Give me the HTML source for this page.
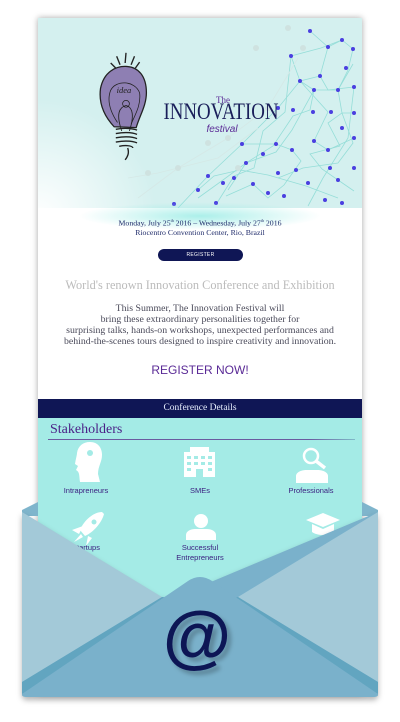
<!DOCTYPE html>
<html><head><meta charset="utf-8"><style>
html,body{margin:0;padding:0;background:#fff;width:400px;height:722px;overflow:hidden;position:relative;font-family:"Liberation Serif",serif}
.card{position:absolute;left:38px;top:18px;width:324px;height:676px;background:#fff;box-shadow:0 0 6px rgba(0,0,0,.35);overflow:hidden}
.hero{position:absolute;left:0;top:0;width:324px;height:190px;background:#d4f0ef;overflow:hidden}
.ab{position:absolute;left:0;width:324px;text-align:center}
.cyan{position:absolute;left:0;top:400px;width:324px;height:300px;background:#a4ebe6}
.lbl{position:absolute;font-family:"Liberation Sans",sans-serif;font-size:7.5px;color:#3b2080;text-align:center;width:90px;line-height:9.5px}
</style></head><body>
<div class="card">
 <div class="hero">
  <div style="position:absolute;left:-60px;top:60px;width:200px;height:200px;background:radial-gradient(circle at 30% 70%,rgba(255,255,255,1) 0%,rgba(255,255,255,0) 60%)"></div>
  <svg width="324" height="190" viewBox="0 0 324 190" style="position:absolute;left:0;top:0">
   <g stroke="#8fdcd6" stroke-width="0.8" fill="none" opacity="0.9">
    <polyline points="272,13 290,29 304,22 315,31 310,52 300,72 304,95 290,105 302,128 272,136 284,151 300,162 316,173"/>
    <polyline points="253,38 262,63 276,72 272,92 255,98 235,128 208,145 185,162 160,180"/>
    <polyline points="290,29 282,58 262,63 290,94 276,123 290,132 316,120"/>
    <polyline points="204,126 238,126 254,132 263,143 246,167 230,180 215,166 188,178"/>
    <polyline points="315,46 300,72 276,72 254,112 238,134 208,145 190,172"/>
    <polyline points="304,22 283,30 253,38 247,94 225,113 216,150 196,158 179,185"/>
    <polyline points="316,95 304,95 315,125 300,145 265,150 240,160"/>
    <polyline points="160,172 176,158 202,152 230,157 268,168 300,180"/>
    <polyline points="282,58 290,72 316,69 310,120 285,160 270,188"/>
    <polyline points="140,190 170,158 204,126 240,90 262,63"/>
   </g>
   <g stroke="#d5e8e6" stroke-width="0.8" fill="none">
    <polyline points="100,180 140,150 190,120 230,90 260,40"/>
    <polyline points="90,160 120,155 180,140 220,110"/>
   </g>
   <g fill="#cfe2e0"><circle cx="140" cy="150" r="3"/><circle cx="190" cy="120" r="3"/><circle cx="110" cy="155" r="3"/><circle cx="230" cy="90" r="3"/><circle cx="265" cy="30" r="3"/><circle cx="218" cy="30" r="3"/><circle cx="250" cy="10" r="3"/><circle cx="200" cy="150" r="3"/><circle cx="170" cy="125" r="3"/></g>
   <g fill="#4a3fe0">
    <circle cx="272" cy="13" r="2"/><circle cx="290" cy="29" r="2"/><circle cx="304" cy="22" r="2"/><circle cx="315" cy="31" r="2"/><circle cx="253" cy="38" r="2"/><circle cx="262" cy="63" r="2"/><circle cx="282" cy="58" r="2"/><circle cx="300" cy="72" r="2"/><circle cx="276" cy="72" r="2"/><circle cx="308" cy="50" r="2"/><circle cx="316" cy="69" r="2"/><circle cx="240" cy="90" r="2"/><circle cx="255" cy="92" r="2"/><circle cx="275" cy="94" r="2"/><circle cx="293" cy="94" r="2"/><circle cx="304" cy="110" r="2"/><circle cx="316" cy="95" r="2"/><circle cx="204" cy="126" r="2"/><circle cx="238" cy="126" r="2"/><circle cx="254" cy="132" r="2"/><circle cx="276" cy="123" r="2"/><circle cx="290" cy="132" r="2"/><circle cx="316" cy="120" r="2"/><circle cx="225" cy="136" r="2"/><circle cx="240" cy="155" r="2"/><circle cx="258" cy="152" r="2"/><circle cx="270" cy="165" r="2"/><circle cx="292" cy="150" r="2"/><circle cx="300" cy="162" r="2"/><circle cx="316" cy="150" r="2"/><circle cx="208" cy="145" r="2"/><circle cx="185" cy="165" r="2"/><circle cx="170" cy="158" r="2"/><circle cx="160" cy="172" r="2"/><circle cx="196" cy="160" r="2"/><circle cx="215" cy="166" r="2"/><circle cx="230" cy="175" r="2"/><circle cx="246" cy="178" r="2"/><circle cx="287" cy="182" r="2"/><circle cx="304" cy="185" r="2"/><circle cx="178" cy="185" r="2"/><circle cx="136" cy="186" r="2"/>
   </g>
   <!-- bulb -->
   <g transform="translate(20,28) scale(0.85)">
    <path d="M66,95 C52,80 48,65 50,50 C54,30 68,24 79,24 C95,24 104,36 104,55 C104,70 96,82 92,96 Z" fill="#8e7fb3" stroke="#222" stroke-width="1.5"/>
    <path d="M70,90 C60,75 58,62 62,52 C68,40 90,40 96,55 C98,70 90,82 86,92" fill="none" stroke="#222" stroke-width="0.9"/>
    <path d="M75,100 C68,80 72,72 80,70 C88,72 90,82 84,100" fill="none" stroke="#222" stroke-width="1"/>
    <circle cx="80" cy="68" r="4" fill="none" stroke="#222" stroke-width="0.9"/>
    <text x="69" y="55" font-family="Liberation Serif,serif" font-style="italic" font-size="10" fill="#222">idea</text>
    <g stroke="#222" stroke-width="1.6" fill="none"><path d="M79,20 L80,8"/><path d="M73,22 L69,12"/><path d="M86,22 L90,12"/><path d="M68,26 L62,20"/><path d="M91,26 L96,19"/>
     <path d="M68,98 C78,96 88,97 93,99 M68,103 C80,101 88,102 93,104 M68,108 C80,106 88,107 93,109 M68,113 C80,111 88,112 93,114 M72,118 C82,116 88,118 88,120 M82,120 C84,126 82,130 79,134"/></g>
   </g>
   <text x="185" y="85" font-family="Liberation Serif,serif" font-size="9" fill="#5a2a96" text-anchor="middle">The</text>
   <text x="183" y="101" font-family="Liberation Serif,serif" font-size="23" fill="#1a1f5a" text-anchor="middle" textLength="115" lengthAdjust="spacingAndGlyphs">INNOVATION</text>
   <text x="184" y="114" font-family="Liberation Sans,sans-serif" font-style="italic" font-size="10" fill="#5a2a96" text-anchor="middle">festival</text>
  </svg>
 </div>
 <div style="position:absolute;left:40px;top:184px;width:244px;height:28px;background:radial-gradient(ellipse at center,rgba(150,235,228,.8),rgba(255,255,255,0) 70%)"></div>
 <div class="ab" style="top:198px;font-size:7.8px;line-height:9.5px;color:#1f2b6a">Monday, July 25<sup style="font-size:4px">th</sup> 2016 – Wednesday, July 27<sup style="font-size:4px">th</sup> 2016<br>Riocentro Convention Center, Rio, Brazil</div>
 <div style="position:absolute;left:120px;top:231px;width:85px;height:12px;border-radius:6px;background:#0f1655;color:#fff;font-family:'Liberation Sans',sans-serif;font-size:5px;line-height:12px;text-align:center;letter-spacing:.3px">REGISTER</div>
 <div class="ab" style="top:260px;font-size:12.3px;color:#bbbbbb">World's renown Innovation Conference and Exhibition</div>
 <div class="ab" style="top:285px;font-size:9.8px;line-height:11px;color:#4a4a5a">This Summer, The Innovation Festival will<br>bring these extraordinary personalities together for<br>surprising talks, hands-on workshops, unexpected performances and<br>behind-the-scenes tours designed to inspire creativity and innovation.</div>
 <div class="ab" style="top:345px;font-family:'Liberation Sans',sans-serif;font-size:12px;color:#5a2a96">REGISTER NOW!</div>
 <div style="position:absolute;left:0;top:381px;width:324px;height:19px;background:#0f1655;color:#e8f0ff;font-size:9.5px;line-height:19px;text-align:center">Conference Details</div>
 <div class="cyan">
  <div style="position:absolute;left:12px;top:4px;font-size:14px;color:#4a1f86">Stakeholders</div>
  <div style="position:absolute;left:10px;top:21px;width:307px;height:1px;background:linear-gradient(90deg,#6a5ba0 0%,#6a5ba0 85%,#7fb9c8 100%)"></div>
  <svg style="position:absolute;left:0;top:0" width="324" height="300">
   <g fill="#fff">
    <path d="M42,64 C41,58 42,54 38,52 L40,48 L37,46 C38,40 39,37 39,35 C40,28 45,24 52,24 C60,24 64,30 64,37 C64,44 60,48 60,56 L62,64 Z"/>
    <circle cx="52" cy="35" r="3" fill="#a4ebe6"/>
    <rect x="146" y="34" width="31" height="25"/><rect x="152" y="29" width="19" height="6"/>
    <g fill="#a4ebe6"><rect x="149" y="38" width="4" height="3"/><rect x="156" y="38" width="4" height="3"/><rect x="163" y="38" width="4" height="3"/><rect x="170" y="38" width="4" height="3"/><rect x="149" y="44" width="4" height="3"/><rect x="156" y="44" width="4" height="3"/><rect x="163" y="44" width="4" height="3"/><rect x="170" y="44" width="4" height="3"/><rect x="149" y="50" width="4" height="3"/><rect x="170" y="50" width="4" height="3"/><rect x="158" y="51" width="7" height="8"/></g>
    <path d="M258,65 L258,58 C258,54 264,52 268,52 L280,52 C284,52 290,54 290,58 L290,65 Z"/>
    <circle cx="273" cy="38" r="7" fill="none" stroke="#fff" stroke-width="2.5"/>
    <path d="M278,43 L287,50" stroke="#fff" stroke-width="3.5"/>
    <path d="M64,94 C56,94 46,102 42,112 L47,118 C56,114 64,104 66,96 Z"/>
    <circle cx="56" cy="104" r="2.5" fill="#a4ebe6"/>
    <path d="M45,108 L34,112 L41,116 Z M50,118 L48,128 L54,120 Z M43,116 L36,124 L45,119 Z"/>
    <circle cx="163" cy="103" r="7"/>
    <path d="M148,122 L148,117 C148,113 153,111 157,111 L169,111 C173,111 178,113 178,117 L178,122 Z"/>
    <path d="M268,102 L285,95 L302,102 L285,109 Z"/>
    <path d="M274,106 L274,114 C280,118 290,118 296,114 L296,106 L285,111 Z"/>
   </g>
  </svg>
  <div class="lbl" style="left:3px;top:68px">Intrapreneurs</div>
  <div class="lbl" style="left:117px;top:68px">SMEs</div>
  <div class="lbl" style="left:228px;top:68px">Professionals</div>
  <div class="lbl" style="left:3px;top:125px">Startups</div>
  <div class="lbl" style="left:117px;top:125px">Successful<br>Entrepreneurs</div>
  <div class="lbl" style="left:228px;top:125px">Academ</div>
 </div>
</div>
<svg style="position:absolute;left:0;top:0" width="400" height="722" viewBox="0 0 400 722">
 <defs><filter id="sh" x="-10%" y="-10%" width="120%" height="130%"><feDropShadow dx="0" dy="3" stdDeviation="3" flood-color="#000" flood-opacity="0.3"/></filter>
 <filter id="s2"><feDropShadow dx="4" dy="4" stdDeviation="2" flood-color="#000" flood-opacity="0.25"/></filter></defs>
 <path d="M22,510 L38,502 L38,516 L22,516 Z" fill="#7fb5cc"/>
 <path d="M378,510 L362,502 L362,516 L378,516 Z" fill="#7fb5cc"/>
 <g filter="url(#sh)">
  <path d="M22,512 L160,597 L175,597 L378,512 L378,692 Q378,697 373,697 L27,697 Q22,697 22,692 Z" fill="#7ab1cb"/>
 </g>
 <path d="M22,512 L162,597 L22,682 Z" fill="#a3c9d8"/>
 <path d="M378,512 L238,597 L378,682 Z" fill="#a3c9d8"/>
 <path d="M22,682 L162,597 L175,600 L22,694 Z" fill="#62a5c0"/>
 <path d="M378,682 L238,597 L225,600 L378,694 Z" fill="#62a5c0"/>
 <path d="M22,694 L188,581 Q200,573 212,581 L378,694 L378,695 Q378,697 373,697 L27,697 Q22,697 22,695 Z" fill="#7ab1cb"/>
 <text x="197" y="660" font-family="Liberation Sans,sans-serif" font-weight="bold" font-size="70" fill="#0f1655" text-anchor="middle" filter="url(#s2)">@</text>
</svg>
</body></html>
